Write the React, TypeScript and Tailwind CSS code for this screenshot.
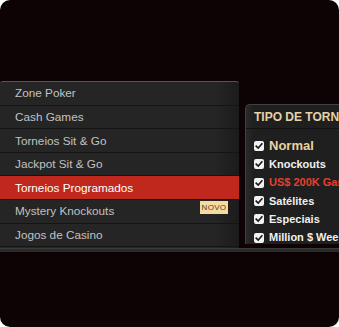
import React from 'react';

const menu = [
  'Zone Poker',
  'Cash Games',
  'Torneios Sit & Go',
  'Jackpot Sit & Go',
  'Torneios Programados',
  'Mystery Knockouts',
  'Jogos de Casino',
];

const filters = [
  { label: 'Normal', tone: 'gold' },
  { label: 'Knockouts', tone: 'white' },
  { label: 'US$ 200K Garantidos', tone: 'red' },
  { label: 'Satélites', tone: 'white' },
  { label: 'Especiais', tone: 'white' },
  { label: 'Million $ Week', tone: 'white' },
];

function Check() {
  return (
    <span className="w-[10px] h-[10px] shrink-0 rounded-[2px] bg-[#f2f2f2] flex items-center justify-center">
      <svg viewBox="0 0 10 10" className="w-[8px] h-[8px]">
        <path d="M1.5 5.2 L4 7.6 L8.6 2.2" fill="none" stroke="#1a1a1a" strokeWidth={2} strokeLinecap="square" />
      </svg>
    </span>
  );
}

export default function App() {
  return (
    <div
      className="w-[339px] h-[327px] rounded-[10px] bg-[#0e0304] overflow-hidden flex flex-col"
      style={{ fontFamily: '"Liberation Sans", Arial, sans-serif' }}
    >
      <div className="h-[81px] shrink-0" />

      <div className="flex items-start h-[167px] shrink-0">
        {/* Game menu */}
        <div className="w-[239px] h-[167px] shrink-0 rounded-t-[3px] border-t border-[#555] bg-[linear-gradient(to_right,#252525_90%,#1b1b1b)] flex flex-col">
          {menu.map((item) => {
            const active = item === 'Torneios Programados';
            return (
              <div
                key={item}
                className={`relative h-[23.6px] flex items-center pl-[15px] text-[11.75px] border-b border-[#141414] ${
                  active ? 'bg-[#c0281e] text-white' : 'text-[#c2c2c2]'
                }`}
              >
                {item}
                {item === 'Mystery Knockouts' && (
                  <span className="absolute left-[200px] top-[1px] w-[28px] h-[13px] bg-[#f6dba0] text-[#4a4232] text-[8px] leading-[13px] text-center tracking-[0.3px]">
                    NOVO
                  </span>
                )}
              </div>
            );
          })}
        </div>

        {/* Tournament type filter */}
        <div className="ml-[6px] mt-[23px] flex-1 h-[140px] rounded-tl-[5px] border-t border-l border-[#404040] bg-[linear-gradient(to_right,#2a2a2a,#1f1f1f_8%)] overflow-hidden">
          <div className="h-[24px] flex items-center pl-[8px] border-b border-[#121212] text-[12px] font-bold text-[#e6d2a4] whitespace-nowrap">
            TIPO DE TORNEIO
          </div>
          <div className="pt-[8px] pl-[8px] flex flex-col">
            {filters.map((f) => (
              <div key={f.label} className="h-[18.3px] flex items-center gap-[5px] whitespace-nowrap">
                <Check />
                <span
                  className={`font-bold ${
                    f.tone === 'gold'
                      ? 'text-[13px] text-[#e9d39e]'
                      : f.tone === 'red'
                      ? 'text-[11px] text-[#e5402f]'
                      : 'text-[11px] text-[#f0f0f0]'
                  }`}
                >
                  {f.label}
                </span>
              </div>
            ))}
          </div>
        </div>
      </div>

      {/* bottom bar */}
      <div className="h-[4px] shrink-0 bg-[#2a2a2a] border-t border-[#3c3c3c]" />
    </div>
  );
}
